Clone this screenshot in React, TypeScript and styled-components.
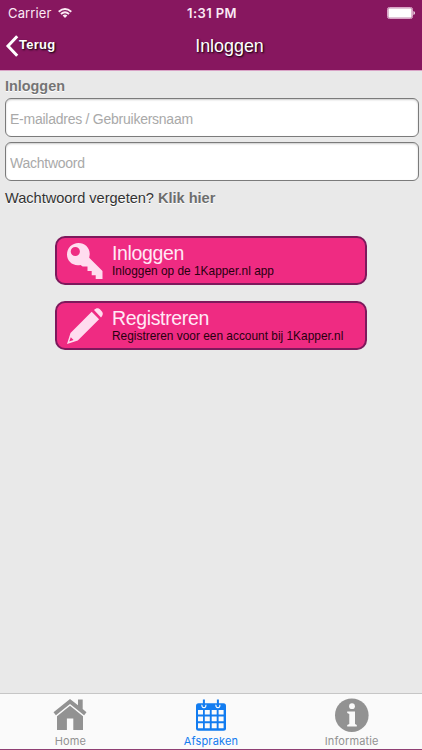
import React from "react";
import styled, { createGlobalStyle } from "styled-components";

const GlobalStyle = createGlobalStyle`
  * { box-sizing: border-box; }
  body { margin: 0; background: #e9e9e9; }
`;

const Screen = styled.div`
  width: 422px;
  height: 750px;
  display: flex;
  flex-direction: column;
  overflow: hidden;
  background: #e9e9e9;
  font-family: "Liberation Sans", Arial, sans-serif;
  white-space: nowrap;
`;

const Header = styled.header`
  height: 71px;
  flex: none;
  background: #87175f;
  border-bottom: 1px solid #d9a3c6;
  color: #fff;
`;

const StatusBar = styled.div`
  height: 24px;
  display: grid;
  grid-template-columns: 1fr auto 1fr;
  align-items: center;
  padding: 1px 7px 0 8px;
  font: 13px/22px Inter, sans-serif;
  color: #fbeaf5;
`;

const Carrier = styled.div`
  display: flex;
  align-items: center;
  gap: 6px;
  letter-spacing: 0.13px;
`;

const Clock = styled.div`
  padding-left: 1px;
  font-weight: 600;
  font-size: 13px;
  letter-spacing: 0.4px;
`;

const BatterySlot = styled.div`
  display: flex;
  justify-content: flex-end;
`;

const NavBar = styled.div`
  height: 46px;
  display: grid;
  grid-template-columns: 1fr auto 1fr;
  align-items: center;
  padding: 0 6px 2px 5px;
  text-shadow: 1px 1px 2px #000;
`;

const Back = styled.div`
  display: flex;
  align-items: center;
  font-size: 13px;
  line-height: 20px;
  font-weight: 700;
`;

const BackLabel = styled.span`
  padding-bottom: 3px;
  letter-spacing: 0.25px;
`;

const Title = styled.h1`
  margin: 0;
  padding-left: 38px;
  font-size: 17.9px;
  line-height: 22px;
  font-weight: 400;
`;

const Main = styled.main`
  flex: 1;
  padding: 5px 3px 0 5px;
  display: flex;
  flex-direction: column;
`;

const SectionLabel = styled.label`
  height: 22px;
  font-size: 14.4px;
  line-height: 20px;
  font-weight: 700;
  color: #747474;
  text-shadow: 0 1px 0 #fff;
`;

const Field = styled.input`
  width: 100%;
  height: 39px;
  flex: none;
  margin: 0 0 5px;
  padding: 2px 4px 0;
  border: 1px solid #7b7b7b;
  border-radius: 6px;
  background: #fff;
  box-shadow: inset 0 1px 2px #ccc;
  font: 14px "Liberation Sans", Arial, sans-serif;
  letter-spacing: -0.25px;
  outline: none;
  &::placeholder { color: #a9a9a9; opacity: 1; }
`;

const Forgot = styled.p`
  margin: 2px 0 0;
  height: 21px;
  font-size: 14.6px;
  letter-spacing: -0.03px;
  line-height: 20px;
  color: #333;
  text-shadow: 0 1px 0 #fff;
`;

const ForgotLink = styled.b`
  color: #6d6d6d;
`;

const Actions = styled.div`
  display: flex;
  flex-direction: column;
  gap: 16px;
  padding: 27px 52px 0 50px;
`;

const ActionButton = styled.button`
  height: 49px;
  padding: 0 0 0 9px;
  border: 2px solid #7d195c;
  border-radius: 10px;
  background: #ef2b82;
  display: flex;
  align-items: center;
  gap: 8px;
  text-align: left;
  font-family: inherit;
`;

const ActionText = styled.span`
  display: flex;
  flex-direction: column;
`;

const ActionTitle = styled.span`
  font-size: 19.5px;
  letter-spacing: -0.35px;
  line-height: 21px;
  color: #ffe9f6;
`;

const ActionHint = styled.span`
  font-size: 11.9px;
  line-height: 14px;
  color: #27000f;
`;

const TabBar = styled.nav`
  flex: none;
  height: 57px;
  border-top: 1px solid #c6c6c6;
  border-bottom: 1px solid #8f3e73;
  background: #fafafa;
  display: grid;
  grid-template-columns: repeat(3, 1fr);
`;

const Tab = styled.div<{ $active?: boolean }>`
  display: flex;
  flex-direction: column;
  align-items: center;
  padding-top: 4px;
  color: ${(p) => (p.$active ? "#127cf0" : "#929292")};
  font: 11px/16px Inter, sans-serif;
  letter-spacing: 0.14px;
`;

const WifiIcon = () => (
  <svg width="14" height="10" viewBox="0 0 14 10" fill="none" stroke="#fbeaf5" strokeWidth="1.8">
    <path d="M.7 3.7Q7-1.8 13.3 3.7M2.9 6Q7 2.5 11.1 6" />
    <path d="M4.6 7.5Q7 5.7 9.4 7.5L7 10Z" fill="#fbeaf5" stroke="none" />
  </svg>
);

const BatteryIcon = () => (
  <svg width="28" height="12" viewBox="0 0 28 12">
    <rect x=".5" y=".5" width="25" height="11" rx="1.8" fill="#87175f" stroke="#d9a5c7" />
    <rect x="1.3" y="1.3" width="23.4" height="9.4" rx=".8" fill="#fff" />
    <path d="M26.5 4q1.4.3 1.4 2t-1.4 2Z" fill="#fff" />
  </svg>
);

const ChevronIcon = () => (
  <svg width="14" height="24" viewBox="0 0 14 24" fill="none" stroke="#fff" strokeWidth="3">
    <path d="M12.2 2.2 3 12l9.2 9.8" />
  </svg>
);

const KeyIcon = () => (
  <svg width="38" height="38" viewBox="0 0 38 38">
    <path
      fill="#ffdcef"
      fillRule="evenodd"
      d="M12.5 1C19 1 24 6 23.7 12.4l-.5 3.3L36.5 29v8h-6.8v-3.7h-4V29h-4.2v-4.4h-4.8l-2.2-1.7C7 24.5 1 19.3 1 12.5 1 6 6 1 12.5 1ZM9.3 4.9a4.6 4.6 0 1 0 0 9.2a4.6 4.6 0 0 0 0-9.2Z"
    />
  </svg>
);

const PencilIcon = () => (
  <svg width="38" height="38" viewBox="0 0 38 38">
    <path
      fill="#ffdcef"
      fillRule="evenodd"
      d="M1 37 4.5 26 25.7 4.8 33.1 12.2 11.8 33.4ZM3.2 34.5 7.6 33 4.8 30.2ZM28 3.1C30.5.6 32.5.7 34.8 3.2 37.5 5.8 37.4 7.5 35 10.4Z"
    />
  </svg>
);

const HomeIcon = () => (
  <svg width="34" height="35" viewBox="0 0 34 35" fill="#929292">
    <path d="M.5 14.2 17 1l8 6.3V1.5h4.7V11l3.8 3.2-2.4 3.1L17 6.1 2.9 17.3Z" />
    <path d="M4 18.2 17 7.8l13 10.4V32h-9.7V20.6h-6.4V32H4Z" />
  </svg>
);

const CalendarIcon = () => (
  <svg width="32" height="35" viewBox="0 0 32 35">
    <rect x="1" y="5.2" width="30" height="27.5" rx="2.5" fill="#127cf0" />
    <path
      fill="#fafafa"
      d="M3 12h5v4.4H3ZM9.8 12h5v4.4h-5ZM16.7 12h5v4.4h-5ZM23.6 12h5v4.4h-5ZM3 18.4h5v4.9H3ZM9.8 18.4h5v4.9h-5ZM16.7 18.4h5v4.9h-5ZM23.6 18.4h5v4.9h-5ZM3 25.3h5v4.9H3ZM9.8 25.3h5v4.9h-5ZM16.7 25.3h5v4.9h-5ZM23.6 25.3h5v4.9h-5Z"
    />
    <path d="M7.1 6.8a2 2 0 1 0 3.6 0M21.1 6.8a2 2 0 1 0 3.6 0" fill="none" stroke="#fafafa" strokeWidth="1.2" />
    <path d="M8.9 1.5v6M22.9 1.5v6" stroke="#127cf0" strokeWidth="2" />
  </svg>
);

const InfoIcon = () => (
  <svg width="34" height="35" viewBox="0 0 34 35">
    <circle cx="16.8" cy="17.2" r="16.8" fill="#929292" />
    <circle cx="17" cy="8.2" r="2.9" fill="#fafafa" />
    <path fill="#fafafa" d="M12.2 13.4H20V26l1.8 1.1v1.4h-9.6v-1.4l2.1-1.1v-9.9l-2.1-1.2Z" />
  </svg>
);

export default function App() {
  return (
    <Screen>
      <GlobalStyle />
      <Header>
        <StatusBar>
          <Carrier>Carrier <WifiIcon /></Carrier>
          <Clock>1:31 PM</Clock>
          <BatterySlot><BatteryIcon /></BatterySlot>
        </StatusBar>
        <NavBar>
          <Back><ChevronIcon /><BackLabel>Terug</BackLabel></Back>
          <Title>Inloggen</Title>
        </NavBar>
      </Header>
      <Main>
        <SectionLabel htmlFor="user">Inloggen</SectionLabel>
        <Field id="user" placeholder="E-mailadres / Gebruikersnaam" />
        <Field type="password" placeholder="Wachtwoord" />
        <Forgot>Wachtwoord vergeten? <ForgotLink>Klik hier</ForgotLink></Forgot>
        <Actions>
          <ActionButton>
            <KeyIcon />
            <ActionText>
              <ActionTitle>Inloggen</ActionTitle>
              <ActionHint>Inloggen op de 1Kapper.nl app</ActionHint>
            </ActionText>
          </ActionButton>
          <ActionButton>
            <PencilIcon />
            <ActionText>
              <ActionTitle>Registreren</ActionTitle>
              <ActionHint>Registreren voor een account bij 1Kapper.nl</ActionHint>
            </ActionText>
          </ActionButton>
        </Actions>
      </Main>
      <TabBar>
        <Tab><HomeIcon />Home</Tab>
        <Tab $active><CalendarIcon />Afspraken</Tab>
        <Tab><InfoIcon />Informatie</Tab>
      </TabBar>
    </Screen>
  );
}
